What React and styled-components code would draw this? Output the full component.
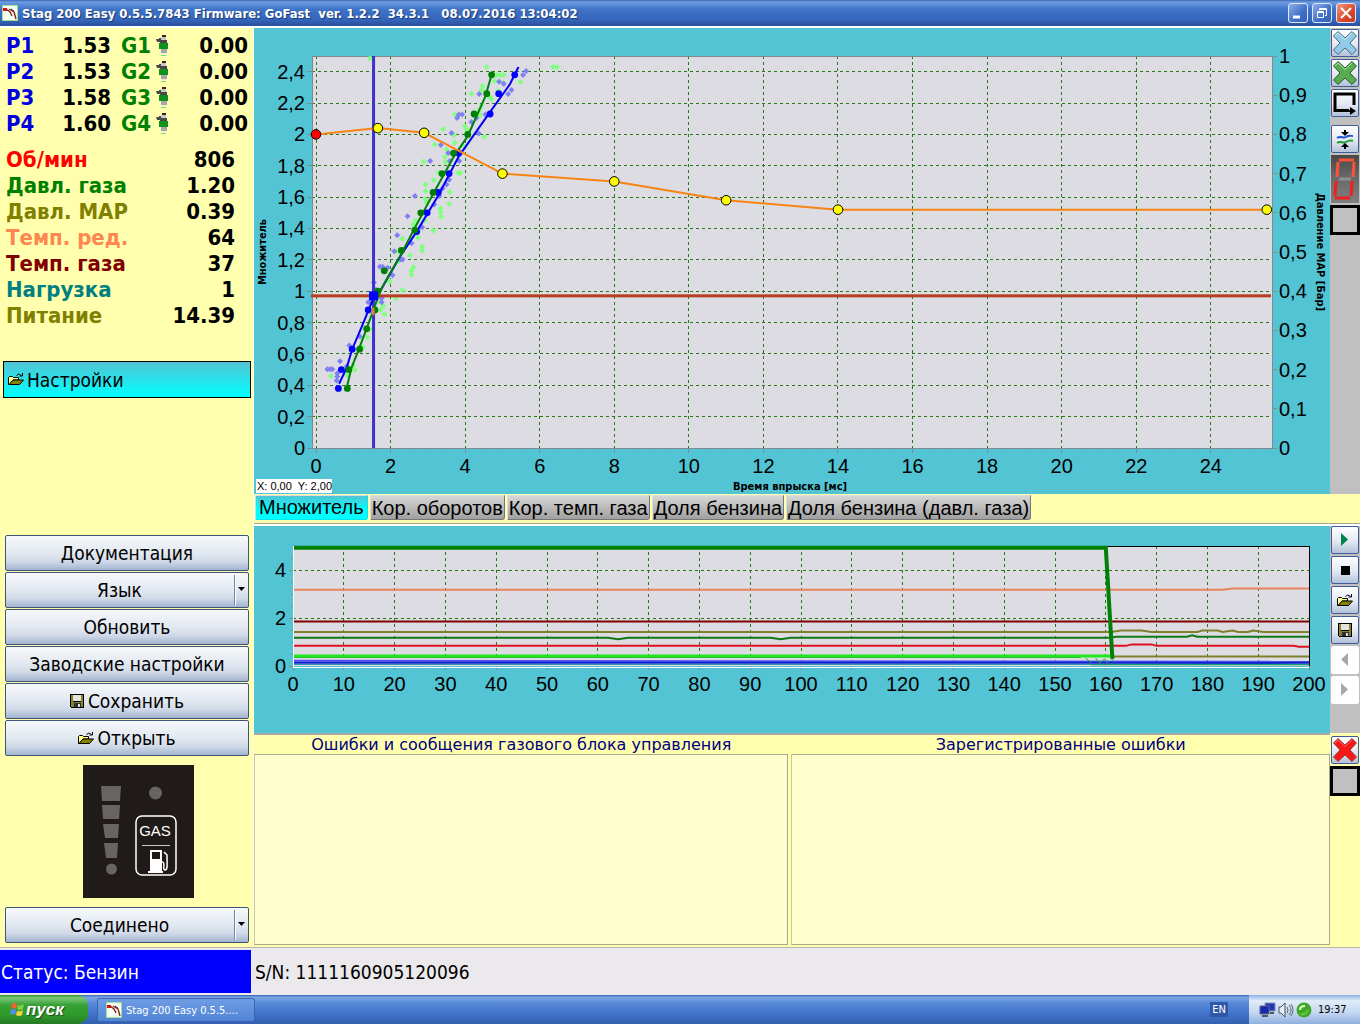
import React, { useEffect, useRef, useState } from "react";
import styled, { createGlobalStyle } from "styled-components";

const GlobalStyle = createGlobalStyle`
  * {
    box-sizing: border-box;
  }
  body {
    margin: 0;
    background: #ffffae;
    font-family: "DejaVu Sans Condensed", Tahoma, sans-serif;
    color: #000;
  }
  button,
  select {
    margin: 0;
    padding: 0;
    font: inherit;
    color: inherit;
  }
`;

const uiFont = `"DejaVu Sans Condensed", Tahoma, sans-serif`;
const chartFont = `"Liberation Sans", Arial, sans-serif`;

const Page = styled.div`
  display: flex;
  flex-direction: column;
  min-height: 100vh;
`;

/* title bar */

const TitleBar = styled.header`
  display: flex;
  align-items: center;
  height: 28px;
  padding: 0 4px 0 2px;
  border-bottom: 2px solid #fff;
  background: linear-gradient(#3a68b8, #6f9be0 8%, #3f74c8 35%, #3566bc 75%, #2b4f9c);
`;

const WindowTitle = styled.h1`
  flex: 1;
  margin: 0 0 0 4px;
  font: bold 13px ${uiFont};
  color: #fff;
  white-space: pre;
  text-shadow: 1px 1px 1px #1c3a78;
`;

const WindowButtons = styled.div`
  display: flex;
  gap: 4px;
`;

const WindowButton = styled.button`
  display: flex;
  width: 20px;
  height: 20px;
  border: 1px solid #dfe8f8;
  border-radius: 3px;
  background: ${p =>
    p.$close
      ? "linear-gradient(135deg, #f09a80, #d8482a 60%, #c43a1c)"
      : "linear-gradient(135deg, #8fb0ea, #3f6fc8 60%, #3560b4)"};
`;

/* main layout */

const Workspace = styled.main`
  display: grid;
  grid-template-columns: 253px minmax(0, 1fr);
  flex: 1;
`;

const SideBar = styled.aside`
  display: flex;
  flex-direction: column;
  padding: 5px 4px 4px 5px;
`;

const Content = styled.div`
  display: flex;
  flex-direction: column;
  border-left: 1px solid #fffff0;
`;

const Row = styled.div`
  display: flex;
  ${p => p.$grow && "flex: 1;"}
`;

const Strip = styled.div`
  display: flex;
  flex-direction: column;
  align-items: center;
  gap: 2px;
  width: 30px;
  padding-top: ${p => p.$top || 0}px;
  background: ${p => (p.$plain ? "#ffffae" : "#c0c0c0")};
`;

const ToolButton = styled.button`
  display: flex;
  align-items: center;
  justify-content: center;
  width: 28px;
  height: 28px;
  margin-bottom: ${p => (p.$gap ? "6px" : "0")};
  border: 1px solid #3f5c96;
  border-radius: 2px;
  background: linear-gradient(#fdfeff, #e3e9f2 55%, #b3c1da);
  &:disabled {
    border-color: #fff;
    background: #fff;
  }
`;

const SevenSegment = styled.div`
  display: flex;
  width: 28px;
  height: 48px;
  background: linear-gradient(#484848, #686868 45%, #808080);
`;

const FrameBox = styled.div`
  width: 30px;
  height: 30px;
  border: 3px solid #000;
  background: #c0c0c0;
`;

/* side bar */

const Readings = styled.table`
  width: ${p => p.$width}px;
  margin-bottom: 10px;
  border-collapse: collapse;
  table-layout: fixed;
  font: bold 22px ${uiFont};
  line-height: 26px;
  th,
  td {
    padding: 0;
    height: 26px;
    text-align: left;
    white-space: nowrap;
  }
  th {
    padding-left: 1px;
  }
  td {
    text-align: right;
  }
`;

const Name = styled.th`
  color: ${p => p.$color};
`;

const InjectorCell = styled.td`
  svg {
    display: block;
  }
`;

const SettingsButton = styled.button`
  display: flex;
  align-items: center;
  gap: 3px;
  height: 37px;
  margin: 22px -2px 0;
  padding: 0 4px;
  border: 1px solid #000;
  background: linear-gradient(#52c4d4, #00ffff);
  font-size: 19px;
`;

const ButtonStack = styled.div`
  display: flex;
  flex-direction: column;
  gap: 1px;
  margin-top: auto;
`;

const face = `
  border: 1px solid #3f5578;
  border-radius: 2px;
  background: linear-gradient(#f6f9fb, #e2e8f0 50%, #d0d9e7 75%, #a3b4d0);
`;

const WideButton = styled.button`
  display: flex;
  align-items: center;
  justify-content: center;
  gap: 3px;
  height: 36px;
  font-size: 19px;
  ${face}
`;

const DropDown = styled.label`
  display: grid;
  grid-template-columns: minmax(0, 1fr) 14px;
  height: 36px;
  ${face}
  select {
    grid-area: 1 / 1 / 2 / 3;
    appearance: none;
    padding-right: 15px;
    border: 0;
    background: none;
    font-size: 19px;
    text-align: center;
    text-align-last: center;
  }
  svg {
    grid-area: 1 / 2;
    height: 100%;
    pointer-events: none;
  }
`;

const SwitchPanel = styled.div`
  align-self: center;
  display: flex;
  width: 111px;
  height: 133px;
  margin: 8px 0 8px 22px;
`;

/* charts */

const ChartPanel = styled.div`
  flex: 1;
  min-width: 0;
  background: #52c4d4;
  svg {
    display: block;
  }
`;

const TickText = styled.text`
  font: 20px ${chartFont};
  text-anchor: ${p => p.$anchor || "middle"};
`;

const AxisTitle = styled.text`
  font: bold 11px ${uiFont};
  text-anchor: middle;
`;

const CoordText = styled.text`
  font: 11px ${chartFont};
`;

const Tabs = styled.nav`
  display: flex;
  gap: 2px;
  height: 32px;
  padding: 1px 0 4px 1px;
  border-bottom: 2px solid #fff;
  box-shadow: inset 0 -1px #a8a88c;
`;

const Tab = styled.button`
  padding: 1px 1px 0;
  border: 1px solid ${p => (p.$active ? "#00e8f0" : "#777")};
  border-top-color: #ddd;
  border-left-color: ${p => (p.$active ? "#aef" : "#ddd")};
  border-radius: 0 0 3px 0;
  background: ${p =>
    p.$active
      ? "linear-gradient(#52c4d4, #00ffff 60%)"
      : "linear-gradient(#d6d6d6, #a0a0a0)"};
  font: 20px ${chartFont};
  line-height: 22px;
  ${p => p.$active && "padding: 0 3px 1px;"}
  white-space: nowrap;
`;

/* errors */

const ErrorLists = styled.div`
  display: grid;
  grid-template-columns: 534fr 538fr;
  column-gap: 3px;
  flex: 1;
  border-top: 2px solid #a8a8a8;
  padding-bottom: 2px;
`;

const ErrorSection = styled.section`
  display: flex;
  flex-direction: column;
`;

const ErrorTitle = styled.h2`
  margin: 0;
  font: 16px/19px "DejaVu Sans", Verdana, sans-serif;
  color: #000080;
  text-align: center;
  white-space: nowrap;
`;

const ErrorList = styled.div`
  flex: 1;
  border: 1px solid #a8a88c;
  border-left-color: #c8c8a8;
  background: #ffffce;
`;

/* bottom bars */

const StatusBar = styled.footer`
  display: grid;
  grid-template-columns: 251px 1fr;
  align-items: center;
  height: 48px;
  padding: 2px 0;
  border-top: 1px solid #b8b8b0;
  background: #ece9ec;
  font-size: 19px;
`;

const FuelStatus = styled.div`
  display: flex;
  align-items: center;
  align-self: stretch;
  padding-left: 1px;
  background: #0000ff;
  color: #fff;
`;

const Serial = styled.div`
  padding-left: 4px;
`;

const TaskBar = styled.div`
  display: flex;
  align-items: stretch;
  height: 29px;
  background: linear-gradient(#3a64b8, #7ba4e4 8%, #5688d8 30%, #3f6fc6 70%, #3460b0);
  font-size: 11px;
  color: #fff;
`;

const StartButton = styled.button`
  display: flex;
  align-items: center;
  gap: 2px;
  width: 88px;
  padding-left: 10px;
  border: 0;
  border-radius: 0 10px 10px 0;
  background: linear-gradient(#2f8a30, #7cc878 10%, #35a035 35%, #2f9a2a 70%, #257a24);
  font: italic bold 17px ${chartFont};
  color: #fff;
  text-shadow: 1px 1px 1px #184a18;
`;

const TaskButton = styled.button`
  display: flex;
  align-items: center;
  gap: 4px;
  width: 158px;
  margin: 3px 0 2px 9px;
  padding-left: 8px;
  border: 1px solid #3a66b4;
  border-radius: 2px;
  background: linear-gradient(#6f9de4, #5084d4);
  text-align: left;
`;

const Language = styled.div`
  align-self: center;
  margin-left: auto;
  padding: 1px 2px;
  background: #3058a8;
`;

const Tray = styled.div`
  display: flex;
  align-items: center;
  gap: 2px;
  width: 111px;
  margin-left: 21px;
  padding-left: 10px;
  background: linear-gradient(#8fb2e4, #e0ecfa 20%, #c4d8f2 60%, #90b0e0);
  color: #000;
`;

const Clock = styled.time`
  margin-left: 4px;
`;

const injectorReadings = [
  ["P1", "1.53", "G1", "0.00"],
  ["P2", "1.53", "G2", "0.00"],
  ["P3", "1.58", "G3", "0.00"],
  ["P4", "1.60", "G4", "0.00"]
];

const engineReadings = [
  ["Об/мин", "806", "#ff0000"],
  ["Давл. газа", "1.20", "#008000"],
  ["Давл. MAP", "0.39", "#808000"],
  ["Темп. ред.", "64", "#ff8650"],
  ["Темп. газа", "37", "#800000"],
  ["Нагрузка", "1", "#008080"],
  ["Питание", "14.39", "#808000"]
];

const tabs = [
  "Множитель",
  "Кор. оборотов",
  "Кор. темп. газа",
  "Доля бензина",
  "Доля бензина (давл. газа)"
];

// injection time [ms], multiplier
const multiplier = [
  [0, 2], [1.66, 2.04], [2.9, 2.01], [5, 1.75], [8, 1.7], [11, 1.58], [14, 1.52], [25.5, 1.52]
];

const petrolPoints = [
  [5.33, 2.38], [4.9, 2.26], [4.67, 2.13], [3.83, 1.88], [3.57, 1.75], [3.28, 1.63],
  [2.98, 1.5], [2.7, 1.38], [1.4, 0.88], [0.97, 0.63], [0.68, 0.5], [0.6, 0.38]
];

const petrolLine = [
  [5.43, 2.43], [5.2, 2.32], [4.6, 2.12], [3.83, 1.86], [3.28, 1.61], [2.7, 1.38],
  [2.25, 1.22], [1.72, 1], [1.53, 0.95], [1.22, 0.77], [0.97, 0.63], [0.82, 0.51], [0.62, 0.41]
];

const gasPoints = [
  [4.71, 2.38], [4.58, 2.26], [4.24, 2.13], [4.07, 2], [3.69, 1.88], [3.38, 1.75],
  [3.14, 1.63], [2.81, 1.5], [2.65, 1.39], [2.29, 1.26], [1.83, 1.13], [1.66, 1],
  [1.58, 0.88], [1.36, 0.76], [1.17, 0.63], [0.88, 0.5], [0.84, 0.38]
];

const gasLine = [
  [4.71, 2.38], [4.54, 2.24], [4.07, 1.99], [3.7, 1.86], [3.14, 1.62], [2.62, 1.39],
  [2.27, 1.23], [1.95, 1.1], [1.72, 1], [1.54, 0.88], [1.34, 0.75], [1.15, 0.63],
  [0.95, 0.51], [0.84, 0.4]
];

const gasSamples = [
  [360, 92], [710, 118], [910, 118], [922, 118], [740, 142], [752, 142], [762, 142], [812, 163],
  [735, 160], [760, 165], [698, 175], [695, 188], [665, 198], [745, 190], [720, 208], [725, 214],
  [695, 235], [688, 248], [690, 262], [615, 260], [645, 295], [650, 305], [580, 304], [605, 316],
  [612, 322], [703, 327], [640, 353], [615, 345], [555, 350], [590, 365], [585, 387], [587, 403],
  [522, 401], [625, 436], [632, 436], [567, 435], [552, 457], [527, 470], [527, 490], [527, 515],
  [530, 525], [600, 493], [598, 528], [572, 541], [572, 553], [574, 567], [497, 578], [525, 577],
  [490, 590], [550, 608], [505, 612], [505, 630], [457, 633], [517, 657], [517, 668], [440, 672],
  [480, 682], [445, 700], [490, 718], [485, 729], [485, 741], [420, 761], [458, 787], [438, 811],
  [385, 821], [400, 834], [392, 846], [404, 859], [360, 904], [352, 928], [340, 958], [310, 1011],
  [243, 1044], [315, 1026], [292, 1041]
];

const petrolSamples = [
  [829, 130], [820, 142], [748, 162], [762, 168], [785, 187], [775, 199], [688, 199], [637, 260],
  [627, 260], [622, 271], [707, 260], [680, 271], [665, 283], [687, 317], [605, 316], [573, 352],
  [595, 376], [600, 400], [541, 400], [628, 400], [598, 456], [590, 470], [578, 482], [568, 505],
  [495, 505], [553, 530], [473, 565], [517, 598], [442, 622], [485, 646], [433, 670], [452, 695],
  [458, 695], [390, 717], [398, 717], [413, 720], [428, 742], [372, 764], [378, 786], [395, 811],
  [355, 823], [365, 823], [395, 823], [330, 926], [298, 953], [270, 1000], [232, 1024],
  [240, 1024], [247, 1024], [262, 1036], [262, 1046], [260, 1058], [290, 1016]
];

const fromCounts = ([t, m]) => [(t - 198) / 112, (1260 - m) / 470];

// oscilloscope traces: colour, thickness, [time, value]
const traces = [
  ["#e8845c", 2, [[0, 3.18], [183, 3.18], [185, 3.23], [200, 3.23]]],
  ["#800000", 2, [[0, 1.85], [200, 1.85]]],
  ["#80802c", 2, [
    [0, 1.42], [161, 1.42], [163, 1.48], [167, 1.48], [169, 1.42], [178, 1.42], [179, 1.48],
    [182, 1.48], [183, 1.42], [185, 1.48], [186, 1.42], [188, 1.42], [189, 1.48], [191, 1.42],
    [200, 1.42]
  ]],
  ["#107818", 2, [
    [0, 1.18], [62, 1.18], [64, 1.12], [66, 1.18], [94, 1.18], [96, 1.12], [98, 1.18],
    [161, 1.18], [162, 1.22], [176, 1.22], [177, 1.28], [178, 1.22], [200, 1.22]
  ]],
  ["#e01020", 2, [[0, 0.84], [164, 0.84], [165, 0.9], [169, 0.9], [170, 0.84], [197, 0.84], [198, 0.8], [200, 0.8]]],
  ["#80802c", 2, [[161, 0.4], [200, 0.4]]],
  ["#109020", 1, [[0, 0.36], [155, 0.36]]],
  ["#20e820", 3, [[0, 0.42], [161, 0.42]]],
  ["#5050f4", 2, [[0, 0.22], [200, 0.18]]],
  ["#1020d0", 2, [[0, 0.14], [156, 0.14], [190, 0.12], [200, 0.14]]],
  ["#1080a0", 1, [[0, 0.07], [200, 0.07]]],
  ["#10a060", 1, [[157, 0.05], [200, 0.05]]],
  ["#008008", 4, [[0, 4.93], [160, 4.93], [161.3, 0.3]]]
];

const range = (from, to, step) => {
  const out = [];
  for (let v = from; v <= to + step / 100; v += step) {
    out.push(Number(v.toFixed(4)));
  }
  return out;
};

const label = v => String(v).replace(".", ",");

const useWidth = initial => {
  const ref = useRef(null);
  const [width, setWidth] = useState(initial);
  useEffect(() => {
    const observer = new ResizeObserver(([entry]) =>
      setWidth(Math.round(entry.contentRect.width))
    );
    observer.observe(ref.current);
    return () => observer.disconnect();
  }, []);
  return [ref, width];
};

const Grid = props => (
  <line stroke="#287818" strokeDasharray="3 3" shapeRendering="crispEdges" {...props} />
);

const Tick = props => <line stroke="#7d8f96" shapeRendering="crispEdges" {...props} />;

const Line = ({ points, sx, sy, ...rest }) => (
  <polyline
    fill="none"
    points={points.map(([x, y]) => `${sx(x)},${sy(y)}`).join(" ")}
    {...rest}
  />
);

const Diamonds = ({ points, sx, sy, color }) => (
  <path
    fill={color}
    d={points
      .map(fromCounts)
      .map(([x, y]) => `M${sx(x) - 3} ${sy(y)}l3 -3l3 3l-3 3z`)
      .join("")}
  />
);

const MultiplierChart = () => {
  const [ref, width] = useWidth(1076);
  const left = 58;
  const right = width - 58;
  const top = 28;
  const bottom = 420;
  const sx = v => left + 4 + (v * (right - left - 4)) / 25.64;
  const sy = v => bottom - v * 156.8;

  return (
    <ChartPanel ref={ref}>
      <svg width={width} height={466} role="img" aria-label="Множитель">
        <rect x={left} y={top} width={right - left} height={392} fill="#dcdce2" />
        {range(0, 24, 2).map(v => (
          <Grid key={v} x1={sx(v)} x2={sx(v)} y1={top} y2={bottom} />
        ))}
        {range(0.2, 2.4, 0.2).map(v => (
          <Grid key={v} x1={left} x2={right} y1={sy(v)} y2={sy(v)} />
        ))}
        <path
          d={`M${left} ${bottom}V${top}H${right}V${bottom}Z`}
          fill="none"
          stroke="#808890"
          shapeRendering="crispEdges"
        />
        {range(0, 25.5, 0.5).map(v => (
          <Tick key={v} x1={sx(v)} x2={sx(v)} y1={bottom} y2={bottom + (v % 2 ? 2 : 5)} />
        ))}
        {range(0, 2.4, 0.2).map(v => (
          <React.Fragment key={v}>
            <Tick x1={left - 5} x2={left} y1={sy(v)} y2={sy(v)} />
            <TickText $anchor="end" x={left - 7} y={sy(v) + 7}>
              {label(v)}
            </TickText>
          </React.Fragment>
        ))}
        {range(0, 1, 0.1).map(v => (
          <React.Fragment key={v}>
            <Tick x1={right} x2={right + 5} y1={bottom - v * 392} y2={bottom - v * 392} />
            <TickText $anchor="start" x={right + 7} y={bottom - v * 392 + 7}>
              {label(v)}
            </TickText>
          </React.Fragment>
        ))}
        {range(0, 24, 2).map(v => (
          <TickText key={v} x={sx(v)} y={bottom + 25}>
            {v}
          </TickText>
        ))}

        <Diamonds points={gasSamples} sx={sx} sy={sy} color="#80ff80" />
        <Diamonds points={petrolSamples} sx={sx} sy={sy} color="#8080f4" />
        <rect x={sx(1.53) - 1} y={top} width={3} height={392} fill="#3c32d2" />
        <rect x={left - 1} y={sy(0.98)} width={right - left} height={3} fill="#b83c20" />
        <Line points={petrolLine} sx={sx} sy={sy} stroke="#0000f0" strokeWidth={2} />
        <Line points={gasLine} sx={sx} sy={sy} stroke="#008010" strokeWidth={2} />
        {petrolPoints.map(([x, y]) => (
          <circle key={y} cx={sx(x)} cy={sy(y)} r={3.4} fill="#0000ff" />
        ))}
        {gasPoints.map(([x, y]) => (
          <circle key={y} cx={sx(x)} cy={sy(y)} r={3.4} fill="#008000" />
        ))}
        <rect x={sx(1.53) - 4} y={sy(0.98) - 3} width={9} height={9} fill="#0000ff" />
        <ellipse cx={sx(1.53)} cy={sy(0.87)} rx={1.6} ry={4} fill="#e08040" />
        <Line points={multiplier} sx={sx} sy={sy} stroke="#f88414" strokeWidth={2} />
        {multiplier.map(([x, y], i) => (
          <circle
            key={x}
            cx={sx(x)}
            cy={sy(y)}
            r={4.8}
            fill={i === 0 ? "#ff0000" : "#ffff00"}
            stroke="#000"
          />
        ))}

        <AxisTitle transform="translate(12 224) rotate(-90)">Множитель</AxisTitle>
        <AxisTitle transform={`translate(${width - 13} 224) rotate(90)`}>
          Давление MAP [Бар]
        </AxisTitle>
        <AxisTitle x={(left + right) / 2 - 2} y={462}>
          Время впрыска [мс]
        </AxisTitle>
        <rect x={2} y={451} width={76} height={14} fill="#fff" />
        <CoordText x={3} y={462} xmlSpace="preserve">
          X: 0,00{"\u00a0 "}Y: 2,00
        </CoordText>
      </svg>
    </ChartPanel>
  );
};

const ScopeChart = () => {
  const [ref, width] = useWidth(1076);
  const left = 39;
  const right = width - 21;
  const top = 20;
  const bottom = 140;
  const sx = v => left + (v * (right - left)) / 200;
  const sy = v => bottom - v * 24;

  return (
    <ChartPanel ref={ref}>
      <svg width={width} height={207} role="img" aria-label="Осциллоскоп">
        <rect x={left} y={top} width={right - left} height={120} fill="#dcdce2" />
        {range(10, 190, 10).map(v => (
          <Grid key={v} x1={sx(v)} x2={sx(v)} y1={top} y2={bottom} />
        ))}
        {[2, 4].map(v => (
          <Grid key={v} x1={left} x2={right} y1={sy(v)} y2={sy(v)} />
        ))}
        {range(0, 200, 2.5).map(v => (
          <Tick key={v} x1={sx(v)} x2={sx(v)} y1={bottom} y2={bottom + (v % 10 ? 2 : 4)} />
        ))}
        {range(0, 4.5, 0.5).map(v => (
          <Tick key={v} x1={left - (v % 2 ? 2 : 4)} x2={left} y1={sy(v)} y2={sy(v)} />
        ))}
        <path
          d={`M${left} ${top}H${right}V${bottom}`}
          fill="none"
          stroke="#000"
          shapeRendering="crispEdges"
        />
        {traces.map(([color, size, points], i) => (
          <Line key={i} points={points} sx={sx} sy={sy} stroke={color} strokeWidth={size} />
        ))}
        <path
          d={`M${sx(156)} 132l6 5M${sx(158)} 132l4 5l5 -4l3 4M${sx(161)} 132l3 4`}
          fill="none"
          stroke="#10b030"
        />
        <path
          d={`M${left} ${top}V${bottom + 1}H${right}`}
          fill="none"
          stroke="#fff"
          shapeRendering="crispEdges"
        />
        {[0, 2, 4].map(v => (
          <TickText key={v} $anchor="end" x={left - 7} y={sy(v) + 7}>
            {v}
          </TickText>
        ))}
        {range(0, 200, 10).map(v => (
          <TickText key={v} x={sx(v)} y={bottom + 25}>
            {v}
          </TickText>
        ))}
      </svg>
    </ChartPanel>
  );
};

/* icons */

const AppIcon = () => (
  <svg width="16" height="16" viewBox="0 0 16 16" aria-hidden="true">
    <rect width="16" height="16" fill="#f4fff4" stroke="#50c050" />
    <path d="M1 3h4v3H1z" fill="#e01010" />
    <path d="M4 4l4 3l2 4M7 4l5 3l2 7" fill="none" stroke="#902020" strokeWidth="1.4" />
    <path d="M9 4l3 2" stroke="#333" />
  </svg>
);

const Injector = () => (
  <svg width="14" height="22" viewBox="0 0 14 22" aria-hidden="true">
    <path d="M6 0h4v2H6z" fill="#402020" />
    <path d="M5 2h5v4H5z" fill="#c8c8c8" />
    <path d="M0 4h3V3h2v2h6v3H4V7H1z" fill="#484848" />
    <path d="M3 8h9v6H3z" fill="#10901c" />
    <path d="M5 14h6v4H5z" fill="#a8a8ac" />
    <path d="M6 18h4v1H6z" fill="#e8e8e8" />
    <path d="M5 20h5v1H5z" fill="#70d880" />
  </svg>
);

const FolderIcon = () => (
  <svg width="16" height="15" viewBox="0 0 16 15" aria-hidden="true">
    <path d="M.5 12.500V5.500l1-1h3l1 1h5v2.500H5l-3 4.500z" fill="#ffff90" stroke="#000" />
    <path d="M1 12.500L5 8h10.500l-4 4.500z" fill="#848400" stroke="#000" />
    <path d="M8.500 3.500q2-3 5 0M14.500 1v3h-3" fill="none" stroke="#000" />
  </svg>
);

const DiskIcon = () => (
  <svg width="15" height="15" viewBox="0 0 15 15" shapeRendering="crispEdges" aria-hidden="true">
    <path d="M0 0h14v14H1l-1 -1z" fill="#000" />
    <path d="M1 1h2v7h8V1h2v12H1z" fill="#848430" />
    <path d="M3 1h8v6H3z" fill="#e4e4dc" />
    <path d="M4 9h7v4H4z" fill="#303030" />
    <path d="M8 10h2v3H8z" fill="#e0e0e0" />
  </svg>
);

const Cross = ({ fill, light, stroke }) => (
  <svg width="26" height="26" viewBox="0 0 26 26" aria-hidden="true">
    <path
      d="M1.500 6L6 1.500l7 6.500L20 1.500l4.500 4.500l-6.500 7L24.500 20L20 24.500l-7-6.500l-7 6.500L1.500 20l6.500-7z"
      fill={fill}
      stroke={stroke}
    />
    <path d="M3 6L6 3l7 6.500L20 3" fill="none" stroke={light} />
  </svg>
);

const LoopIcon = () => (
  <svg width="26" height="26" viewBox="0 0 26 26" aria-hidden="true">
    <path d="M17 20.500H3V4h19v11" fill="none" stroke="#000" strokeWidth="3" />
    <path d="M16 21h5" stroke="#000" strokeWidth="2" />
    <path d="M18 17l6 4l-6 4z" />
  </svg>
);

const SqueezeIcon = () => (
  <svg width="26" height="26" viewBox="0 0 26 26" aria-hidden="true">
    <path d="M5 12c4-3 6 1 9-1s5-1 7-1" fill="none" stroke="#2058d0" strokeWidth="2" />
    <path d="M5 17c4-3 6 1 9-1s5-2 7-1" fill="none" stroke="#20a030" strokeWidth="2" />
    <path d="M12 4h2v2h3l-4 4l-4-4h3zM12 23h2v-2h3l-4-4l-4 4h3z" />
  </svg>
);

const Triangle = ({ left, color }) => (
  <svg width="12" height="14" viewBox="0 0 12 14" aria-hidden="true">
    <path d={left ? "M9 0v13L2 6.500z" : "M2 0v13l7-6.500z"} fill={color} />
  </svg>
);

const SegmentDigit = () => (
  <svg width="28" height="48" viewBox="0 0 28 48" aria-hidden="true">
    <path d="M8 5h15M7 7L6 22M23 7l-1 15" fill="none" stroke="#ff5038" strokeWidth="3" />
    <path d="M8 24h12" stroke="#909090" strokeWidth="3" />
    <path d="M5 26L4 41M21 26l-1 15M4 43h15" fill="none" stroke="#f02020" strokeWidth="3" />
  </svg>
);

const DropArrow = () => (
  <svg width="14" viewBox="0 0 14 34" preserveAspectRatio="xMidYMid slice" aria-hidden="true">
    <path d="M.5 2v30" stroke="#7085a8" />
    <path d="M1.500 2v30" stroke="#fff" />
    <path d="M4 14h7l-3.500 4z" />
  </svg>
);

const GasSwitch = () => (
  <svg width="111" height="133" viewBox="0 0 111 133" role="img" aria-label="GAS">
    <rect width="111" height="133" fill="#201a18" />
    <g fill="#686464">
      <path d="M18 21h20l-1 15H19zM19 40h18l-1 14H20zM20 59h16l-1 14H22zM21 78h14l-1 15H23z" />
      <circle cx="28.500" cy="104" r="5.500" />
      <circle cx="72.500" cy="28" r="6.500" />
    </g>
    <rect x="53" y="51" width="40" height="59" rx="6" fill="none" stroke="#fff" strokeWidth="1.500" />
    <text x="72" y="71" fill="#fff" textAnchor="middle" fontFamily="Liberation Sans" fontSize="15">
      GAS
    </text>
    <path d="M59 80.500h28" stroke="#c8c8c8" />
    <path d="M67 85h12v22H67z" fill="#fff" />
    <path d="M69 87h8v7h-8z" fill="#201a18" />
    <path d="M65 107h15" stroke="#fff" strokeWidth="2" />
    <path d="M79 97c4 0 0 8 3 8s2-6 2-15l-3-3" fill="none" stroke="#fff" strokeWidth="1.500" />
  </svg>
);

const WindowsFlag = () => (
  <svg width="14" height="15" viewBox="0 0 14 15" aria-hidden="true">
    <path d="M2 2q3-2 5 0L6 7Q4 5 1 7z" fill="#f06030" />
    <path d="M8 3q3 1 6-1l-1 5q-3 2-6 0z" fill="#80d040" />
    <path d="M1 8q3-2 5 0l-1 5Q3 11 0 13z" fill="#5090f0" />
    <path d="M7 9q3 1 6-1l-1 5q-3 2-6 0z" fill="#f8d040" />
  </svg>
);

const Monitors = () => (
  <svg width="17" height="16" viewBox="0 0 17 16" aria-hidden="true">
    <path d="M6 1h10v8H6z" fill="#2038c0" stroke="#8890a0" />
    <path d="M1 4h9v8H1z" fill="#1828b0" stroke="#606878" />
    <path d="M3 14h6M11 11h4" stroke="#505868" strokeWidth="2" />
  </svg>
);

const Speaker = () => (
  <svg width="16" height="16" viewBox="0 0 16 16" aria-hidden="true">
    <path d="M1 5h2l4-4v14l-4-4H1z" fill="#e8ecf4" stroke="#485060" />
    <path d="M9 5q2 3 0 6M11 3q4 5 0 10M13 2q4 6 0 12" fill="none" stroke="#606870" />
  </svg>
);

const Agent = () => (
  <svg width="16" height="16" viewBox="0 0 16 16" aria-hidden="true">
    <circle cx="8" cy="8" r="7.500" fill="#40a828" />
    <path d="M4 8q0-4 5-4" fill="none" stroke="#e0ffd0" strokeWidth="2" />
    <path d="M5 12q5 1 7-4" fill="none" stroke="#68c848" strokeWidth="2" />
  </svg>
);

const WindowControls = () => (
  <WindowButtons>
    <WindowButton aria-label="Свернуть">
      <svg width="18" height="18">
        <path d="M4 13h7" stroke="#fff" strokeWidth="3" />
      </svg>
    </WindowButton>
    <WindowButton aria-label="Восстановить">
      <svg width="18" height="18" fill="none" stroke="#fff">
        <path d="M6.500 6V4.500h7v7H12M6.500 5.500h7" />
        <path d="M4.500 7.500h6v6h-6zM4.500 8.500h6" />
      </svg>
    </WindowButton>
    <WindowButton $close aria-label="Закрыть">
      <svg width="18" height="18">
        <path d="M4 4l10 10M14 4L4 14" stroke="#fff" strokeWidth="2" />
      </svg>
    </WindowButton>
  </WindowButtons>
);

const SidePanel = () => (
  <SideBar>
    <Readings $width={243}>
      <colgroup>
        <col width="35" />
        <col width="71" />
        <col width="9" />
        <col width="36" />
        <col width="14" />
        <col width="78" />
      </colgroup>
      <tbody>
        {injectorReadings.map(([p, petrol, g, gas]) => (
          <tr key={p}>
            <Name scope="row" $color="#0000e0">{p}</Name>
            <td>{petrol}</td>
            <td />
            <Name scope="row" $color="#008000">{g}</Name>
            <InjectorCell>
              <Injector />
            </InjectorCell>
            <td>{gas}</td>
          </tr>
        ))}
      </tbody>
    </Readings>
    <Readings $width={230}>
      <colgroup>
        <col width="150" />
        <col width="80" />
      </colgroup>
      <tbody>
        {engineReadings.map(([name, value, color]) => (
          <tr key={name}>
            <Name scope="row" $color={color}>{name}</Name>
            <td>{value}</td>
          </tr>
        ))}
      </tbody>
    </Readings>

    <SettingsButton>
      <FolderIcon /> Настройки
    </SettingsButton>

    <ButtonStack>
      <WideButton>Документация</WideButton>
      <DropDown>
        <select aria-label="Язык">
          <option>Язык</option>
          <option>Русский</option>
          <option>English</option>
        </select>
        <DropArrow />
      </DropDown>
      <WideButton>Обновить</WideButton>
      <WideButton>Заводские настройки</WideButton>
      <WideButton>
        <DiskIcon /> Сохранить
      </WideButton>
      <WideButton>
        <FolderIcon /> Открыть
      </WideButton>
      <SwitchPanel>
        <GasSwitch />
      </SwitchPanel>
      <DropDown>
        <select aria-label="Соединение">
          <option>Соединено</option>
          <option>Отключить</option>
        </select>
        <DropArrow />
      </DropDown>
    </ButtonStack>
  </SideBar>
);

export default () => (
  <Page>
    <GlobalStyle />
    <TitleBar>
      <AppIcon />
      <WindowTitle>
        {"Stag 200 Easy 0.5.5.7843 Firmware: GoFast  ver. 1.2.2  34.3.1   08.07.2016 13:04:02"}
      </WindowTitle>
      <WindowControls />
    </TitleBar>

    <Workspace>
      <SidePanel />
      <Content>
        <Row>
          <MultiplierChart />
          <Strip $top={1}>
            <ToolButton aria-label="Удалить точки бензина">
              <Cross fill="#90cce8" light="#d0f0ff" stroke="#506878" />
            </ToolButton>
            <ToolButton aria-label="Удалить точки газа">
              <Cross fill="#58ac50" light="#b0e8a8" stroke="#285828" />
            </ToolButton>
            <ToolButton $gap aria-label="Автоматический масштаб">
              <LoopIcon />
            </ToolButton>
            <ToolButton aria-label="Совместить">
              <SqueezeIcon />
            </ToolButton>
            <SevenSegment>
              <SegmentDigit />
            </SevenSegment>
            <FrameBox />
          </Strip>
        </Row>

        <Tabs>
          {tabs.map((name, i) => (
            <Tab key={name} $active={i === 0}>
              {name}
            </Tab>
          ))}
        </Tabs>

        <Row>
          <ScopeChart />
          <Strip>
            <ToolButton aria-label="Старт">
              <Triangle color="#008050" />
            </ToolButton>
            <ToolButton aria-label="Стоп">
              <svg width="9" height="9">
                <rect width="9" height="9" />
              </svg>
            </ToolButton>
            <ToolButton aria-label="Открыть запись">
              <FolderIcon />
            </ToolButton>
            <ToolButton aria-label="Сохранить запись">
              <DiskIcon />
            </ToolButton>
            <ToolButton disabled aria-label="Назад">
              <Triangle left color="#a8a8a8" />
            </ToolButton>
            <ToolButton disabled aria-label="Вперёд">
              <Triangle color="#a8a8a8" />
            </ToolButton>
          </Strip>
        </Row>

        <Row $grow>
          <ErrorLists>
            <ErrorSection>
              <ErrorTitle>Ошибки и сообщения газового блока управления</ErrorTitle>
              <ErrorList />
            </ErrorSection>
            <ErrorSection>
              <ErrorTitle>Зарегистрированные ошибки</ErrorTitle>
              <ErrorList />
            </ErrorSection>
          </ErrorLists>
          <Strip $plain $top={3}>
            <ToolButton aria-label="Стереть ошибки">
              <Cross fill="#f81818" light="#ff6060" stroke="#a04040" />
            </ToolButton>
            <FrameBox />
          </Strip>
        </Row>
      </Content>
    </Workspace>

    <StatusBar>
      <FuelStatus>Статус: Бензин</FuelStatus>
      <Serial>S/N: 1111160905120096</Serial>
    </StatusBar>

    <TaskBar>
      <StartButton>
        <WindowsFlag /> пуск
      </StartButton>
      <TaskButton>
        <AppIcon /> Stag 200 Easy 0.5.5....
      </TaskButton>
      <Language>EN</Language>
      <Tray>
        <Monitors />
        <Speaker />
        <Agent />
        <Clock>19:37</Clock>
      </Tray>
    </TaskBar>
  </Page>
);
